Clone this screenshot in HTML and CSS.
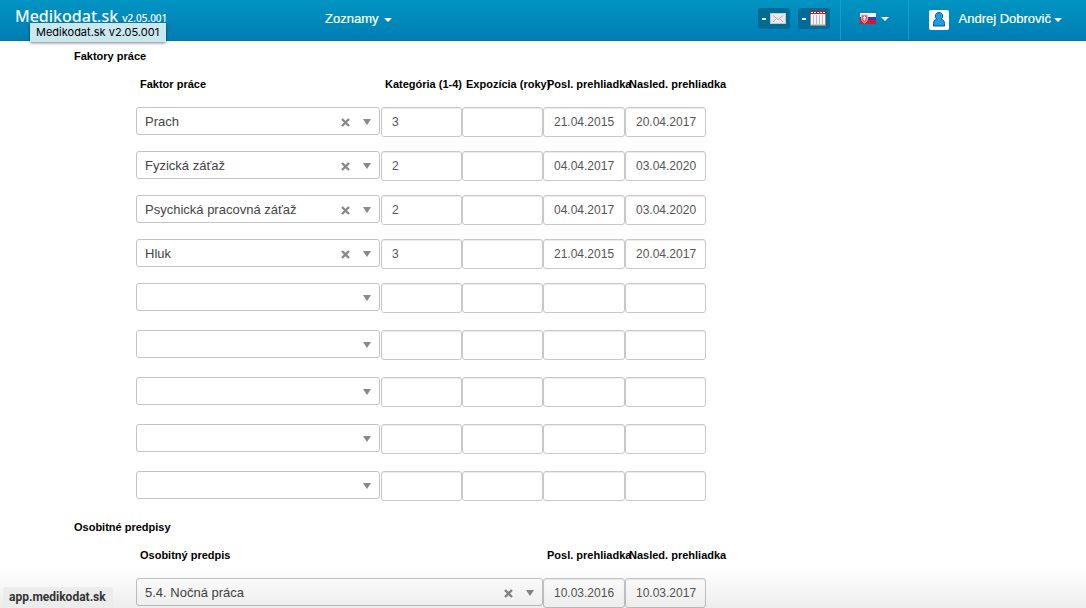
FILE: index.html
```html
<!DOCTYPE html>
<html lang="sk">
<head>
    <meta charset="UTF-8">
    <meta name="viewport" content="width=device-width, initial-scale=1.0">
    <title>Medikodat.sk</title>
    <link rel="stylesheet" href="styles.css">
</head>
<body>

    <!-- Top navigation -->
    <header class="navbar">
        <a class="brand" href="#">Medikodat.sk <small>v2.05.001</small></a>
        <div class="tooltip" role="tooltip">Medikodat.sk v2.05.001</div>
        <nav>
            <button type="button" class="nav-button">Zoznamy <span class="caret caret-spaced"></span></button>
        </nav>
        <div class="nav-right">
            <div class="badges">
                <button type="button" class="badge" aria-label="Správy">
                    <span class="dash"></span>
                    <svg width="16" height="11" viewBox="0 0 16 11">
                        <rect x="0.5" y="0.5" width="15" height="10" fill="#e9e9e9" stroke="#c4c8ca"/>
                        <path d="M3 2.500l5 4 5-4M3 9l3-3M13 9l-3-3" fill="none" stroke="#b0b0b0"/>
                    </svg>
                </button>
                <button type="button" class="badge" aria-label="Kalendár">
                    <span class="dash"></span>
                    <svg width="16" height="15" viewBox="0 0 16 15">
                        <rect width="16" height="14" y="1" fill="#8c8c86"/>
                        <rect width="14" height="11" x="1" y="3" fill="#f4f4f4"/>
                        <rect width="16" height="3" fill="#c4141b"/>
                        <path d="M1 1.500h14" stroke="#fff" stroke-dasharray="2 1"/>
                        <path d="M3.500 4v9M6.500 4v9M9.500 4v9M12.500 4v9" stroke="#bbb"/>
                        <path d="M1 13.500h14" stroke="#c9c9c9"/>
                    </svg>
                </button>
            </div>
            <button type="button" class="nav-button language" aria-label="Jazyk">
                <svg width="16" height="11" viewBox="0 0 16 11">
                    <rect width="16" height="4" fill="#f3f3f3"/>
                    <rect width="16" height="4" y="4" fill="#2b3fc4"/>
                    <rect width="16" height="4" y="7" fill="#e6131b"/>
                    <path d="M1.500 2h6v4.500q0 2-3 3.500q-3-1.500-3-3.500z" fill="#ee5a62" stroke="#f3b7bb" stroke-width="0.800"/>
                    <path d="M4.500 3v5M3 4.500h3M2.800 6h3.400" stroke="#fff" stroke-width="0.800"/>
                </svg>
                <span class="caret"></span>
            </button>
            <button type="button" class="nav-button user">
                <svg width="20" height="20" viewBox="0 0 20 20">
                    <rect width="20" height="20" rx="2" fill="#fff"/>
                    <path d="M10 2.500c-2.400 0-3.700 1.600-3.700 3.500 0 1.400.6 2.400 1.400 3.200C5.200 10 4.500 11.500 4.500 13.500v2.500h11v-2.500c0-2-.7-3.500-3.200-4.300.8-.8 1.400-1.800 1.400-3.200 0-1.900-1.300-3.500-3.700-3.500z" fill="#1b9ede" stroke="#075a8c"/>
                </svg>
                <span class="user-name">Andrej Dobrovič</span>
                <span class="caret"></span>
            </button>
        </div>
    </header>

    <main>
        <section>
            <h2>Faktory práce</h2>
            <div class="grid labels">
                <span>Faktor práce</span>
                <span>Kategória (1-4)</span>
                <span>Expozícia (roky)</span>
                <span>Posl. prehliadka</span>
                <span>Nasled. prehliadka</span>
            </div>
            <div id="factors"></div>
        </section>

        <section>
            <h2>Osobitné predpisy</h2>
            <div class="grid labels rules">
                <span>Osobitný predpis</span>
                <span>Posl. prehliadka</span>
                <span>Nasled. prehliadka</span>
            </div>
            <div id="rules"></div>
        </section>
    </main>

    <div class="bottom-shade"></div>
    <div class="status">app.medikodat.sk</div>

    <script src="script.js"></script>
</body>
</html>
```

FILE: styles.css
```css
* {
    box-sizing: border-box;
}

body {
    margin: 0;
    background: #fff;
    color: #000;
    font-family: "Liberation Sans", Arial, sans-serif;
    font-size: 13px;
    overflow-x: hidden;
}

button, input, select {
    font-family: inherit;
    margin: 0;
}

/* Navbar */
.navbar {
    position: relative;
    display: flex;
    height: 41px;
    background: linear-gradient(#0095c3, #007db2);
    border-bottom: 1px solid #0078ad;
}

.brand {
    flex: 0 0 315px;
    padding: 4px 0 0 15px;
    color: #fff;
    font-family: "Noto Sans", sans-serif;
    font-size: 16px;
    font-weight: 500;
    line-height: 24px;
    text-decoration: none;
    white-space: nowrap;
}

.brand small {
    font-size: 10px;
}

.tooltip {
    position: absolute;
    left: 30px;
    top: 23px;
    z-index: 2;
    padding: 0 7px 0 6px;
    background: #c9e7ee;
    box-shadow: 0 1px 3px rgba(0, 0, 0, 0.5);
    font-family: Inter, sans-serif;
    font-size: 11px;
    line-height: 19px;
    white-space: nowrap;
}

.nav-button {
    display: flex;
    align-items: center;
    height: 40px;
    padding: 0 10px 3px;
    border: 0;
    background: none;
    color: #fff;
    font-size: 13px;
    -webkit-text-stroke: 0.2px #fff;
}

.caret {
    border: 4px solid transparent;
    border-top-color: #fff;
    border-bottom: 0;
}

.caret-spaced {
    margin: 2px 0 0 6px;
}

.nav-right {
    display: flex;
    margin-left: auto;
}

.badges {
    display: flex;
    gap: 8px;
    padding: 8px 10px 0 0;
}

.badge {
    display: flex;
    align-items: center;
    gap: 4px;
    width: 32px;
    height: 21px;
    padding: 0 4px;
    border: 0;
    border-radius: 3px;
    background: #006c95;
}

.dash {
    width: 4px;
    height: 2px;
    background: #fff;
}

.language {
    gap: 5px;
    width: 68px;
    padding-left: 19px;
    border-left: 1px solid #1a9bc9;
}

.user {
    padding: 0 24px 1px 20px;
    border-left: 1px solid #1a9bc9;
}

.user-name {
    margin: 0 3px 2px 10px;
}

/* Form sections */
main {
    padding: 6px 74px 0;
}

h2 {
    margin: 0 0 10px;
    font-size: 11px;
    line-height: 18px;
}

.grid {
    display: grid;
    grid-template-columns: 245px 81px 81px 82px 81px;
    margin: 0 0 14px 62px;
}

.rules {
    grid-template-columns: 407px 82px 81px;
}

.labels {
    font-size: 11px;
    font-weight: bold;
    line-height: 18px;
    white-space: nowrap;
}

.labels span {
    padding-left: 4px;
}

.row-empty {
    margin-bottom: 17px;
}

.picker {
    position: relative;
    height: 28px;
    margin-right: 1px;
}

.rules .picker {
    margin-right: 0;
}

.picker select {
    width: 100%;
    height: 28px;
    padding: 0 60px 0 8px;
    appearance: none;
    border: 1px solid #c4c4c4;
    border-radius: 3px;
    background: #fff;
    color: #444;
    font-size: 13px;
}

.picker::after {
    content: "";
    position: absolute;
    right: 9px;
    top: 12px;
    border: 4px solid transparent;
    border-top: 6px solid #888;
    border-bottom: 0;
    pointer-events: none;
}

.clear {
    position: absolute;
    right: 30px;
    top: 11px;
    display: flex;
    padding: 0;
    border: 0;
    background: none;
}

.field {
    width: 100%;
    min-width: 0;
    height: 30px;
    padding: 0 8px 0 10px;
    border: 1px solid #c8c8c8;
    border-radius: 3px;
    background: #fff;
    box-shadow: inset 0 1px 1px rgba(0, 0, 0, 0.08);
    color: #555;
    font-size: 12px;
}

/* Browser status bubble */
.bottom-shade {
    position: fixed;
    right: 0;
    bottom: 0;
    left: 0;
    height: 40px;
    background: linear-gradient(transparent, rgba(0, 0, 0, 0.07));
    pointer-events: none;
}

.status {
    position: fixed;
    left: 3px;
    bottom: 0;
    padding: 0 7px 0 6px;
    border-radius: 3px 3px 0 0;
    background: #ececec;
    color: #333;
    font-family: Roboto, sans-serif;
    font-size: 12px;
    font-weight: 700;
    line-height: 21px;
}
```

FILE: script.js
```js
const factors = [
    ["Prach", "3", "", "21.04.2015", "20.04.2017"],
    ["Fyzická záťaž", "2", "", "04.04.2017", "03.04.2020"],
    ["Psychická pracovná záťaž", "2", "", "04.04.2017", "03.04.2020"],
    ["Hluk", "3", "", "21.04.2015", "20.04.2017"],
    ["", "", "", "", ""],
    ["", "", "", "", ""],
    ["", "", "", "", ""],
    ["", "", "", "", ""],
    ["", "", "", "", ""]
];

const rules = [
    ["5.4. Nočná práca", "10.03.2016", "10.03.2017"]
];

const clearButton = `
    <button type="button" class="clear" aria-label="Zrušiť">
        <svg width="9" height="9" viewBox="0 0 9 9">
            <path d="M1 1l7 7M8 1l-7 7" stroke="#888" stroke-width="2.4"/>
        </svg>
    </button>`;

// Build one row: a select followed by plain text fields
function renderRow(row, labels, extraClass) {
    const [name, ...values] = row;
    const fields = values
        .map((value, i) => `<input type="text" class="field" aria-label="${labels[i + 1]}" value="${value}">`)
        .join("");

    return `
        <div class="grid ${extraClass} ${name ? "" : "row-empty"}">
            <div class="picker">
                <select aria-label="${labels[0]}"><option>${name}</option></select>
                ${name ? clearButton : ""}
            </div>
            ${fields}
        </div>`;
}

function renderRows(id, rows, extraClass) {
    const target = document.getElementById(id);
    const labels = [...target.previousElementSibling.children].map(el => el.textContent);
    target.innerHTML = rows.map(row => renderRow(row, labels, extraClass)).join("");
}

renderRows("factors", factors, "");
renderRows("rules", rules, "rules");
```
